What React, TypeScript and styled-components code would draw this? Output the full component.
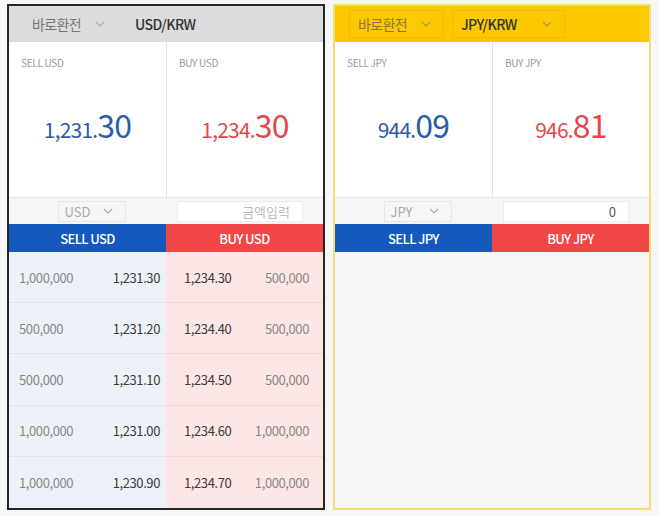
import { styled, createGlobalStyle } from 'styled-components'

const GlobalStyle = createGlobalStyle`
  html, body {
    margin: 0;
    padding: 0;
    background: #f6f7f9;
    font-family: 'Noto Sans CJK KR', 'Noto Sans', sans-serif;
  }
`

const Page = styled.div`
  display: flex;
  gap: 8px;
  padding: 4px 7px;
`

const Panel = styled.div<{ $border: string }>`
  width: 318px;
  height: 506px;
  box-sizing: border-box;
  border: 2px solid ${(p) => p.$border};
  display: flex;
  flex-direction: column;
  background: #f7f7f7;
`

const Header = styled.div<{ $bg: string }>`
  height: 36px;
  flex-shrink: 0;
  background: ${(p) => p.$bg};
  display: flex;
  align-items: center;
  gap: 8px;
  padding: 0 14px;
`

const HeaderBox = styled.div<{ $border: string; $width: number }>`
  width: ${(p) => p.$width}px;
  height: 28px;
  box-sizing: border-box;
  border: 1px solid ${(p) => p.$border};
  display: flex;
  align-items: center;
  justify-content: space-between;
  padding: 0 12px 0 8px;
`

const HeaderText = styled.span<{ $color: string; $strong?: boolean }>`
  font-size: 14px;
  color: ${(p) => p.$color};
  font-weight: ${(p) => (p.$strong ? 500 : 400)};
  letter-spacing: -0.6px;
`

const Chevron = ({ color = '#999' }: { color?: string }) => (
  <svg width='10' height='6' viewBox='0 0 10 6'>
    <path d='M1 1 L5 5 L9 1' fill='none' stroke={color} strokeWidth='1.1' />
  </svg>
)

const Halves = styled.div`
  display: grid;
  grid-template-columns: 1fr 1fr;
`

const Quote = styled(Halves)`
  height: 155px;
  background: #fff;
`

const QuoteCell = styled.div`
  position: relative;
  display: flex;
  align-items: center;
  justify-content: center;
  padding-top: 8px;
  & + & {
    border-left: 1px solid #e6e6e6;
  }
`

const QuoteLabel = styled.span`
  position: absolute;
  top: 13px;
  left: 12px;
  font-size: 10px;
  color: #999;
  letter-spacing: -0.3px;
`

const Price = styled.div<{ $color: string }>`
  color: ${(p) => p.$color};
  display: flex;
  align-items: baseline;
  letter-spacing: -0.8px;
`

const PriceMain = styled.span`
  font-size: 21px;
`

const PriceFrac = styled.span`
  font-size: 32px;
`

const Controls = styled(Halves)`
  height: 27px;
  background: #f5f6f7;
  border-top: 1px solid #e6e6e6;
  box-sizing: border-box;
  align-items: center;
`

const SelectBox = styled.div`
  justify-self: center;
  margin-left: 8px;
  width: 68px;
  height: 21px;
  box-sizing: border-box;
  border: 1px solid #e6e6e6;
  display: flex;
  align-items: center;
  justify-content: space-between;
  padding: 0 12px 0 6px;
  font-size: 13px;
  color: #aaa;
`

const AmountBox = styled.div<{ $filled?: boolean }>`
  justify-self: end;
  margin-right: 20px;
  width: 126px;
  height: 21px;
  box-sizing: border-box;
  border: 1px solid #ececec;
  background: #fff;
  display: flex;
  align-items: center;
  justify-content: flex-end;
  padding-right: 12px;
  font-size: 13px;
  color: ${(p) => (p.$filled ? '#555' : '#bbb')};
`

const Buttons = styled(Halves)`
  height: 28px;
`

const TradeButton = styled.div<{ $bg: string }>`
  background: ${(p) => p.$bg};
  color: #fff;
  font-size: 13px;
  font-weight: 500;
  letter-spacing: -0.6px;
  display: flex;
  align-items: center;
  justify-content: center;
`

const Book = styled.div`
  flex: 1;
  display: grid;
  grid-template-columns: 1fr 1fr;
  grid-auto-rows: 1fr;
`

const BookCell = styled.div<{ $side: 'sell' | 'buy'; $last?: boolean }>`
  background: ${(p) => (p.$side === 'sell' ? '#edf2f9' : '#fde6e6')};
  border-bottom: ${(p) => (p.$last ? 'none' : `1px solid ${p.$side === 'sell' ? '#dfe6ef' : '#f3d6d6'}`)};
  display: flex;
  align-items: center;
  justify-content: space-between;
  padding: ${(p) => (p.$side === 'sell' ? '0 6px 0 10px' : '0 14px 0 18px')};
  font-size: 13px;
  letter-spacing: -0.4px;
`

const Qty = styled.span`
  color: #888;
`

const Rate = styled.span`
  color: #3a3a3a;
`

const rows = [
  ['1,000,000', '1,231.30', '1,234.30', '500,000'],
  ['500,000', '1,231.20', '1,234.40', '500,000'],
  ['500,000', '1,231.10', '1,234.50', '500,000'],
  ['1,000,000', '1,231.00', '1,234.60', '1,000,000'],
  ['1,000,000', '1,230.90', '1,234.70', '1,000,000'],
]

const BLUE = '#2a5ca8'
const RED = '#e4474d'

const PriceView = ({ value, color }: { value: string; color: string }) => {
  const [main, frac] = value.split('.')
  return (
    <Price $color={color}>
      <PriceMain>{main}.</PriceMain>
      <PriceFrac>{frac}</PriceFrac>
    </Price>
  )
}

const App = () => {
  return (
    <>
      <GlobalStyle />
      <Page>
        <Panel $border='#262626'>
          <Header $bg='#dcdcdc'>
            <HeaderBox $border='#dcdcdc' $width={95}>
              <HeaderText $color='#777'>바로환전</HeaderText>
              <Chevron color='#aaa' />
            </HeaderBox>
            <HeaderBox $border='#dcdcdc' $width={113}>
              <HeaderText $color='#333' $strong>USD/KRW</HeaderText>
            </HeaderBox>
          </Header>
          <Quote>
            <QuoteCell>
              <QuoteLabel>SELL USD</QuoteLabel>
              <PriceView value='1,231.30' color={BLUE} />
            </QuoteCell>
            <QuoteCell>
              <QuoteLabel>BUY USD</QuoteLabel>
              <PriceView value='1,234.30' color={RED} />
            </QuoteCell>
          </Quote>
          <Controls>
            <SelectBox>
              USD <Chevron color='#aaa' />
            </SelectBox>
            <AmountBox>금액입력</AmountBox>
          </Controls>
          <Buttons>
            <TradeButton $bg='#1659bd'>SELL USD</TradeButton>
            <TradeButton $bg='#f04646'>BUY USD</TradeButton>
          </Buttons>
          <Book>
            {rows.flatMap((r, i) => [
              <BookCell key={`s${i}`} $side='sell' $last={i === rows.length - 1}>
                <Qty>{r[0]}</Qty>
                <Rate>{r[1]}</Rate>
              </BookCell>,
              <BookCell key={`b${i}`} $side='buy' $last={i === rows.length - 1}>
                <Rate>{r[2]}</Rate>
                <Qty>{r[3]}</Qty>
              </BookCell>,
            ])}
          </Book>
        </Panel>

        <Panel $border='#f1df72'>
          <Header $bg='#fcc900'>
            <HeaderBox $border='#f0bb00' $width={95}>
              <HeaderText $color='#8a7640'>바로환전</HeaderText>
              <Chevron color='#b09040' />
            </HeaderBox>
            <HeaderBox $border='#f0bb00' $width={113}>
              <HeaderText $color='#333' $strong>JPY/KRW</HeaderText>
              <Chevron color='#b09040' />
            </HeaderBox>
          </Header>
          <Quote>
            <QuoteCell>
              <QuoteLabel>SELL JPY</QuoteLabel>
              <PriceView value='944.09' color={BLUE} />
            </QuoteCell>
            <QuoteCell>
              <QuoteLabel>BUY JPY</QuoteLabel>
              <PriceView value='946.81' color={RED} />
            </QuoteCell>
          </Quote>
          <Controls>
            <SelectBox>
              JPY <Chevron color='#aaa' />
            </SelectBox>
            <AmountBox $filled>0</AmountBox>
          </Controls>
          <Buttons>
            <TradeButton $bg='#1659bd'>SELL JPY</TradeButton>
            <TradeButton $bg='#f04646'>BUY JPY</TradeButton>
          </Buttons>
        </Panel>
      </Page>
    </>
  )
}

export default App
